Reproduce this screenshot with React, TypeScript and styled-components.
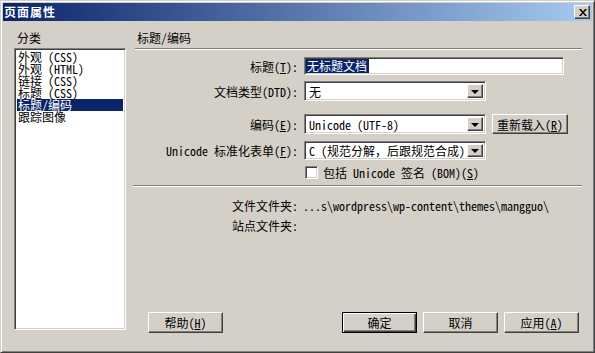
import React from "react";
import styled, { createGlobalStyle } from "styled-components";

const GlobalStyle = createGlobalStyle`
  html, body {
    margin: 0;
    padding: 0;
    background: #d4d0c8;
  }
  body {
    font-family: "Noto Sans Mono CJK SC", "Noto Sans CJK SC", "DejaVu Sans Mono", monospace;
    font-size: 12px;
    color: #000;
  }
`;

const categories = ["外观 (CSS)", "外观 (HTML)", "链接 (CSS)", "标题 (CSS)", "标题/编码", "跟踪图像"];

export default function App() {
  return (
    <>
      <GlobalStyle />
      <Window>
        <TitleBar>
          <TitleText>页面属性</TitleText>
          <CloseButton>
            <svg width="8" height="7" viewBox="0 0 8 7">
              <path d="M0 0h2l2 2.5L6 0h2L5 3.5 8 7H6L4 4.5 2 7H0l3-3.5z" fill="#000" />
            </svg>
          </CloseButton>
        </TitleBar>

        <Body>
          <LeftPane>
            <Caption>分类</Caption>
            <ListBox>
              {categories.map((c, i) => (
                <ListItem key={c} $selected={i === 4}>
                  {c}
                </ListItem>
              ))}
            </ListBox>
          </LeftPane>

          <RightPane>
            <Caption $indent={2}>标题/编码</Caption>
            <Groove $top={3} />

            <FormRow $mt={7}>
              <Label>
                标题(<u>T</u>):
              </Label>
              <TextBox>
                <Selected>无标题文档</Selected>
              </TextBox>
            </FormRow>

            <FormRow $mt={6}>
              <Label>文档类型(DTD):</Label>
              <Combo $h={20}>
                <ComboText>无</ComboText>
                <DropButton>
                  <Arrow />
                </DropButton>
              </Combo>
            </FormRow>

            <FormRow $mt={13}>
              <Label>
                编码(<u>E</u>):
              </Label>
              <Combo $h={20}>
                <ComboText>Unicode (UTF-8)</ComboText>
                <DropButton>
                  <Arrow />
                </DropButton>
              </Combo>
              <PushButton $w={76} $h={20}>
                重新载入(<u>R</u>)
              </PushButton>
            </FormRow>

            <FormRow $mt={7}>
              <Label>
                Unicode 标准化表单(<u>F</u>):
              </Label>
              <Combo $h={19}>
                <ComboText>C (规范分解，后跟规范合成)</ComboText>
                <DropButton>
                  <Arrow />
                </DropButton>
              </Combo>
            </FormRow>

            <FormRow $mt={5}>
              <Label />
              <CheckLine>
                <CheckBox />
                <span>
                  包括 Unicode 签名 (BOM)(<u>S</u>)
                </span>
              </CheckLine>
            </FormRow>

            <Groove $top={6} $left={-2} />

            <InfoRow $mt={12}>
              <Label>文件文件夹:</Label>
              <Value>...s\wordpress\wp-content\themes\mangguo\</Value>
            </InfoRow>
            <InfoRow $mt={6}>
              <Label>站点文件夹:</Label>
              <Value />
            </InfoRow>

            <ButtonBar>
              <PushButton $w={75} $h={21}>
                帮助(<u>H</u>)
              </PushButton>
              <Spacer />
              <PushButton $w={75} $h={21} $default>
                确定
              </PushButton>
              <PushButton $w={75} $h={21}>
                取消
              </PushButton>
              <PushButton $w={75} $h={21}>
                应用(<u>A</u>)
              </PushButton>
            </ButtonBar>
          </RightPane>
        </Body>
      </Window>
    </>
  );
}

const Window = styled.div`
  width: 595px;
  height: 353px;
  box-sizing: border-box;
  background: #d4d0c8;
  border: 1px solid;
  border-color: #d4d0c8 #404040 #404040 #d4d0c8;
  box-shadow: inset 1px 1px #fff, inset -1px -1px #808080;
  padding: 2px;
  display: flex;
  flex-direction: column;
`;

const TitleBar = styled.div`
  height: 18px;
  flex: none;
  display: flex;
  align-items: center;
  justify-content: space-between;
  padding: 0 2px 0 1px;
  background: linear-gradient(to right, #0a246a, #a6caf0);
`;

const TitleText = styled.span`
  color: #fff;
  font-weight: bold;
  font-size: 12px;
  letter-spacing: 1px;
  line-height: 18px;
`;

const CloseButton = styled.div`
  width: 16px;
  height: 14px;
  box-sizing: border-box;
  background: #d4d0c8;
  border: 1px solid;
  border-color: #fff #404040 #404040 #fff;
  box-shadow: inset -1px -1px #808080;
  display: flex;
  align-items: center;
  justify-content: center;
  padding-left: 1px;
`;

const Body = styled.div`
  flex: 1;
  display: flex;
  min-height: 0;
`;

const LeftPane = styled.div`
  width: 112px;
  margin-left: 11px;
  display: flex;
  flex-direction: column;
`;

const Caption = styled.div<{ $indent?: number }>`
  margin-top: 10px;
  height: 14px;
  line-height: 14px;
  padding-left: ${(p) => p.$indent ?? 3}px;
`;

const sunken = `
  box-sizing: border-box;
  background: #fff;
  border: 1px solid;
  border-color: #808080 #fff #fff #808080;
  box-shadow: inset 1px 1px #404040, inset -1px -1px #d4d0c8;
`;

const raised = `
  box-sizing: border-box;
  background: #d4d0c8;
  border: 1px solid;
  border-color: #fff #404040 #404040 #fff;
  box-shadow: inset -1px -1px #808080, inset 1px 1px #d4d0c8;
`;

const ListBox = styled.div`
  ${sunken}
  margin-top: 3px;
  height: 282px;
  padding: 2px;
`;

const ListItem = styled.div<{ $selected?: boolean }>`
  height: 12px;
  line-height: 12px;
  padding-left: 1px;
  white-space: nowrap;
  background: ${(p) => (p.$selected ? "#0a246a" : "transparent")};
  color: ${(p) => (p.$selected ? "#fff" : "#000")};
`;

const RightPane = styled.div`
  width: 447px;
  margin-left: 9px;
  display: flex;
  flex-direction: column;
  padding-bottom: 17px;
`;

const Groove = styled.div<{ $top: number; $left?: number }>`
  margin-top: ${(p) => p.$top}px;
  margin-left: ${(p) => p.$left ?? 0}px;
  height: 0;
  border-top: 1px solid #808080;
  border-bottom: 1px solid #fff;
`;

const FormRow = styled.div<{ $mt: number }>`
  margin-top: ${(p) => p.$mt}px;
  display: grid;
  grid-template-columns: 163px auto auto;
  justify-content: start;
  column-gap: 6px;
  align-items: center;
`;

const InfoRow = styled(FormRow)`
  column-gap: 5px;
  height: 14px;
  line-height: 14px;
`;

const Label = styled.div`
  text-align: right;
  white-space: nowrap;
`;

const Value = styled.div`
  white-space: nowrap;
`;

const TextBox = styled.div`
  ${sunken}
  width: 260px;
  height: 18px;
  padding: 1px 2px 1px 1px;
  display: flex;
  align-items: stretch;
`;

const Selected = styled.span`
  background: #0a246a;
  color: #fff;
  line-height: 14px;
  padding: 0 2px 0 1px;
`;

const Combo = styled.div<{ $h: number }>`
  ${sunken}
  width: 182px;
  height: ${(p) => p.$h}px;
  padding: 2px;
  display: flex;
  align-items: stretch;
`;

const ComboText = styled.div`
  flex: 1;
  white-space: nowrap;
  padding-left: 2px;
  display: flex;
  align-items: center;
`;

const DropButton = styled.div`
  ${raised}
  width: 16px;
  flex: none;
  display: flex;
  align-items: center;
  justify-content: center;
`;

const Arrow = styled.div`
  width: 0;
  height: 0;
  border-left: 4px solid transparent;
  border-right: 4px solid transparent;
  border-top: 4px solid #000;
  margin-top: 1px;
`;

const PushButton = styled.div<{ $w: number; $h: number; $default?: boolean }>`
  ${raised}
  width: ${(p) => p.$w}px;
  height: ${(p) => p.$h}px;
  display: flex;
  align-items: center;
  justify-content: center;
  white-space: nowrap;
  ${(p) =>
    p.$default
      ? `border-color: #000; box-shadow: inset 1px 1px #fff, inset -1px -1px #404040, inset -2px -2px #808080;`
      : ""}
`;

const CheckLine = styled.div`
  display: flex;
  align-items: center;
  gap: 5px;
  margin-left: 1px;
  height: 14px;
`;

const CheckBox = styled.div`
  ${sunken}
  width: 13px;
  height: 13px;
`;

const ButtonBar = styled.div`
  margin-top: auto;
  display: flex;
  gap: 6px;
  padding: 0 3px 0 13px;
`;

const Spacer = styled.div`
  flex: 1;
`;
